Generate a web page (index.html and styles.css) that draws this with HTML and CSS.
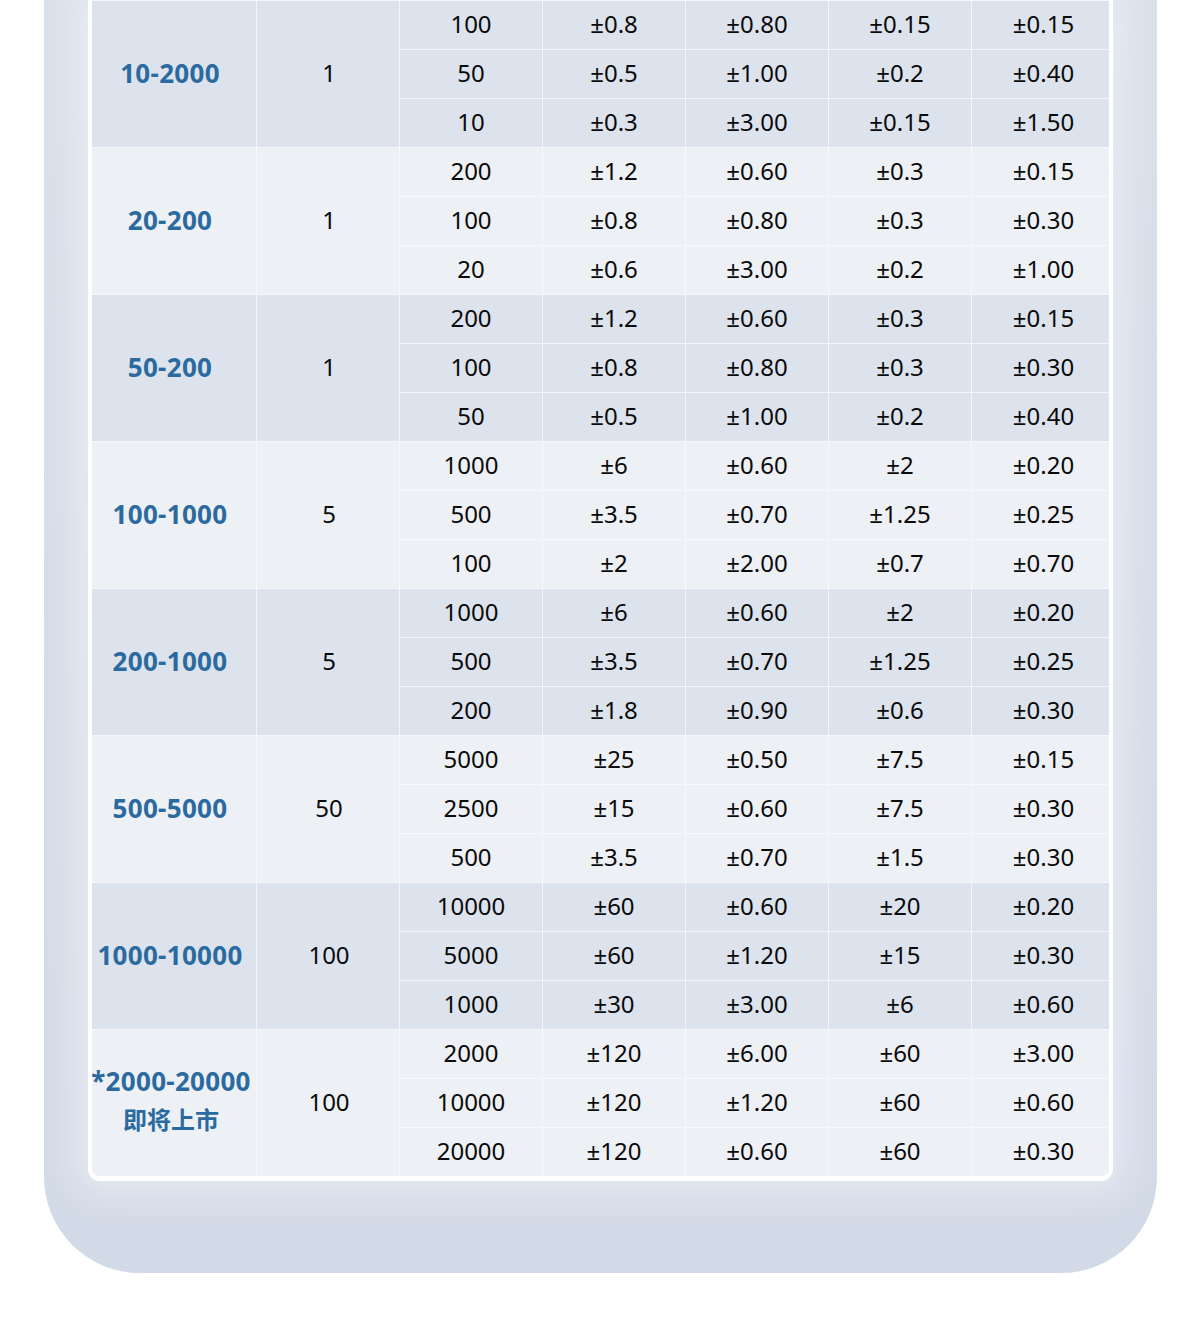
FILE: index.html
```html
<!DOCTYPE html>
<html lang="zh-CN">
<head>
<meta charset="utf-8">
<title>量程表</title>
<link rel="stylesheet" href="styles.css">
</head>
<body>
<div class="page">
  <div class="panel">
    <div class="card">
      <div class="table">
        <div class="group dark">
          <div class="cell range">10-2000</div><div class="cell res">1</div>
          <div class="cell">100</div><div class="cell">±0.8</div><div class="cell">±0.80</div><div class="cell">±0.15</div><div class="cell last">±0.15</div>
          <div class="cell">50</div><div class="cell">±0.5</div><div class="cell">±1.00</div><div class="cell">±0.2</div><div class="cell last">±0.40</div>
          <div class="cell">10</div><div class="cell">±0.3</div><div class="cell">±3.00</div><div class="cell">±0.15</div><div class="cell last">±1.50</div>
        </div>
        <div class="group light">
          <div class="cell range">20-200</div><div class="cell res">1</div>
          <div class="cell">200</div><div class="cell">±1.2</div><div class="cell">±0.60</div><div class="cell">±0.3</div><div class="cell last">±0.15</div>
          <div class="cell">100</div><div class="cell">±0.8</div><div class="cell">±0.80</div><div class="cell">±0.3</div><div class="cell last">±0.30</div>
          <div class="cell">20</div><div class="cell">±0.6</div><div class="cell">±3.00</div><div class="cell">±0.2</div><div class="cell last">±1.00</div>
        </div>
        <div class="group dark">
          <div class="cell range">50-200</div><div class="cell res">1</div>
          <div class="cell">200</div><div class="cell">±1.2</div><div class="cell">±0.60</div><div class="cell">±0.3</div><div class="cell last">±0.15</div>
          <div class="cell">100</div><div class="cell">±0.8</div><div class="cell">±0.80</div><div class="cell">±0.3</div><div class="cell last">±0.30</div>
          <div class="cell">50</div><div class="cell">±0.5</div><div class="cell">±1.00</div><div class="cell">±0.2</div><div class="cell last">±0.40</div>
        </div>
        <div class="group light">
          <div class="cell range">100-1000</div><div class="cell res">5</div>
          <div class="cell">1000</div><div class="cell">±6</div><div class="cell">±0.60</div><div class="cell">±2</div><div class="cell last">±0.20</div>
          <div class="cell">500</div><div class="cell">±3.5</div><div class="cell">±0.70</div><div class="cell">±1.25</div><div class="cell last">±0.25</div>
          <div class="cell">100</div><div class="cell">±2</div><div class="cell">±2.00</div><div class="cell">±0.7</div><div class="cell last">±0.70</div>
        </div>
        <div class="group dark">
          <div class="cell range">200-1000</div><div class="cell res">5</div>
          <div class="cell">1000</div><div class="cell">±6</div><div class="cell">±0.60</div><div class="cell">±2</div><div class="cell last">±0.20</div>
          <div class="cell">500</div><div class="cell">±3.5</div><div class="cell">±0.70</div><div class="cell">±1.25</div><div class="cell last">±0.25</div>
          <div class="cell">200</div><div class="cell">±1.8</div><div class="cell">±0.90</div><div class="cell">±0.6</div><div class="cell last">±0.30</div>
        </div>
        <div class="group light">
          <div class="cell range">500-5000</div><div class="cell res">50</div>
          <div class="cell">5000</div><div class="cell">±25</div><div class="cell">±0.50</div><div class="cell">±7.5</div><div class="cell last">±0.15</div>
          <div class="cell">2500</div><div class="cell">±15</div><div class="cell">±0.60</div><div class="cell">±7.5</div><div class="cell last">±0.30</div>
          <div class="cell">500</div><div class="cell">±3.5</div><div class="cell">±0.70</div><div class="cell">±1.5</div><div class="cell last">±0.30</div>
        </div>
        <div class="group dark">
          <div class="cell range">1000-10000</div><div class="cell res">100</div>
          <div class="cell">10000</div><div class="cell">±60</div><div class="cell">±0.60</div><div class="cell">±20</div><div class="cell last">±0.20</div>
          <div class="cell">5000</div><div class="cell">±60</div><div class="cell">±1.20</div><div class="cell">±15</div><div class="cell last">±0.30</div>
          <div class="cell">1000</div><div class="cell">±30</div><div class="cell">±3.00</div><div class="cell">±6</div><div class="cell last">±0.60</div>
        </div>
        <div class="group light">
          <div class="cell range multi"><span>*2000-20000</span><span class="cn">即将上市</span></div><div class="cell res">100</div>
          <div class="cell">2000</div><div class="cell">±120</div><div class="cell">±6.00</div><div class="cell">±60</div><div class="cell last">±3.00</div>
          <div class="cell">10000</div><div class="cell">±120</div><div class="cell">±1.20</div><div class="cell">±60</div><div class="cell last">±0.60</div>
          <div class="cell">20000</div><div class="cell">±120</div><div class="cell">±0.60</div><div class="cell">±60</div><div class="cell last">±0.30</div>
        </div>
      </div>
    </div>
  </div>
</div>
</body>
</html>
```

FILE: styles.css
```css
html, body {
  margin: 0;
  padding: 0;
  background: #ffffff;
}

body {
  font-family: "Noto Sans", "Noto Sans CJK SC", sans-serif;
  color: #0a0a0a;
}

.page {
  width: 1200px;
  height: 1317px;
  overflow: hidden;
}

.panel {
  box-sizing: border-box;
  width: 1113px;
  margin-left: 44px;
  padding: 0 44px 92px 44px;
  background: linear-gradient(180deg, #d9e0ea 0%, #d3dae7 100%);
  border-radius: 0 0 96px 96px;
}

.card {
  border: 4px solid #ffffff;
  border-top: 0;
  border-bottom-width: 5px;
  border-radius: 0 0 12px 12px;
  overflow: hidden;
  box-shadow: 0 0 36px 14px rgba(255, 255, 255, 0.4);
  background: #f6f8fb;
}

.table {
  display: flex;
  flex-direction: column;
  gap: 1px;
  padding-top: 1px;
  background: #f6f8fb;
}

.group {
  display: grid;
  grid-template-columns: 164px 142px 142px 142px 142px 142px 137px;
  grid-template-rows: repeat(3, 48px);
  gap: 1px;
}

.group.dark .cell {
  background: #dce3ed;
}

.group.light .cell {
  background: #edf0f5;
}

.group.dark {
  background: #f3f5f9;
}

.group.light {
  background: #f7f8fb;
}

.cell {
  box-sizing: border-box;
  display: flex;
  align-items: center;
  justify-content: center;
  font-size: 24px;
  line-height: 1;
  white-space: nowrap;
  padding-bottom: 3px;
}

.cell.last {
  padding-left: 6px;
}

.cell.range,
.cell.res {
  grid-row: span 3;
}

.cell.res {
  padding-left: 2px;
}

.cell.range {
  color: #2b6a9f;
  font-weight: 700;
  font-size: 26px;
  letter-spacing: 0.3px;
  padding-right: 8px;
}

.cell.multi {
  flex-direction: column;
  gap: 13px;
  padding-bottom: 8px;
  padding-right: 6px;
}

.cell.multi .cn {
  font-size: 24px;
  letter-spacing: 0;
  font-family: "Noto Sans CJK SC", sans-serif;
}
```
